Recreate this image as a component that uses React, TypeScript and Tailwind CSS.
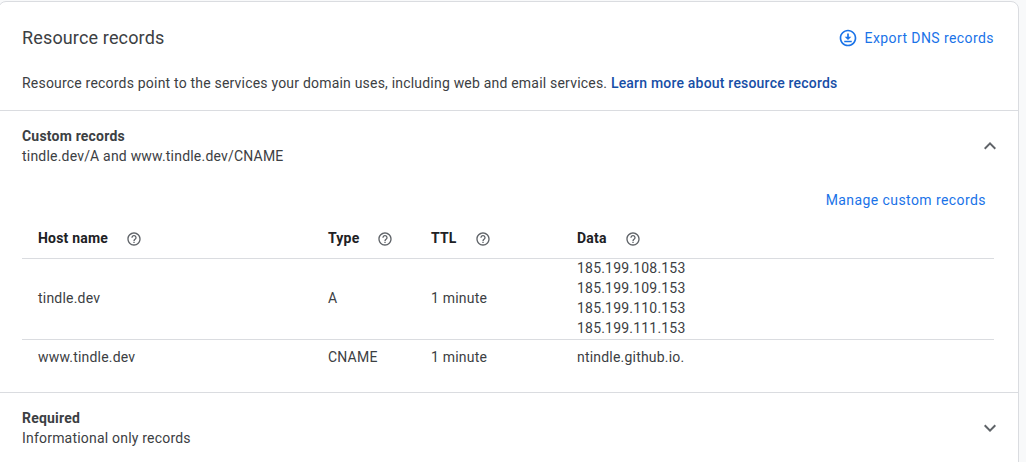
const font = "font-['Roboto',sans-serif]";

function HelpIcon() {
  return (
    <svg viewBox="0 0 24 24" className="h-4 w-4 fill-[#5f6368]">
      <path d="M11 18h2v-2h-2v2zm1-16C6.48 2 2 6.48 2 12s4.48 10 10 10 10-4.48 10-10S17.52 2 12 2zm0 18c-4.41 0-8-3.59-8-8s3.59-8 8-8 8 3.59 8 8-3.59 8-8 8zm0-14c-2.21 0-4 1.79-4 4h2c0-1.1.9-2 2-2s2 .9 2 2c0 2-3 1.75-3 5h2c0-2.25 3-2.5 3-5 0-2.21-1.79-4-4-4z" />
    </svg>
  );
}

function Chevron({ up }: { up?: boolean }) {
  return (
    <svg viewBox="0 0 24 24" className="h-6 w-6 fill-[#5f6368]">
      <path d={up ? "M12 8l-6 6 1.41 1.41L12 10.83l4.59 4.58L18 14z" : "M16.59 8.59L12 13.17 7.41 8.59 6 10l6 6 6-6z"} />
    </svg>
  );
}

function ExportIcon() {
  return (
    <svg viewBox="0 0 24 24" className="h-5 w-5 fill-[#1a73e8]">
      <path d="M12 2C6.48 2 2 6.48 2 12s4.48 10 10 10 10-4.48 10-10S17.52 2 12 2zm0 18c-4.41 0-8-3.59-8-8s3.59-8 8-8 8 3.59 8 8-3.59 8-8 8z" />
      <path d="M13 6.5h-2v4H8l4 4 4-4h-3zM7.5 15.3h9v1.9h-9z" />
    </svg>
  );
}

function Head({ label, width }: { label: string; width: string }) {
  return (
    <th className={`${width} h-10 p-0 pl-4 text-left align-middle font-bold`}>
      <span className="flex items-center gap-[18px]">
        {label}
        <span className="mt-0.5"><HelpIcon /></span>
      </span>
    </th>
  );
}

export default function App() {
  return (
    <div className={`${font} h-[462px] w-[1026px] overflow-hidden bg-[#f8f9fa] text-sm tracking-[0.2px] text-[#3c4043]`}>
      <div className="ml-[-2px] mt-px h-[480px] w-[1021px] rounded-t-lg border border-[#dadce0] bg-white">
        {/* header */}
        <div className="border-b border-[#dadce0] pb-[17px]">
          <div className="flex h-[71px] items-center justify-between pl-[23px] pr-[24px]">
            <h2 className="mt-px text-lg font-normal tracking-[0.15px] text-[#3c4043]">Resource records</h2>
            <a className="flex items-center gap-[7px] tracking-[0.42px] text-[#1a73e8]">
              <ExportIcon />
              Export DNS records
            </a>
          </div>
          <p className="pl-[23px] leading-5">
            Resource records point to the services your domain uses, including web and email services.{" "}
            <a className="font-medium text-[#174ea6]">Learn more about resource records</a>
          </p>
        </div>

        {/* custom records */}
        <div className="border-b border-[#dadce0] pb-[17px]">
          <div className="flex items-center justify-between pl-[23px] pr-4 pt-[15px]">
            <div className="leading-5">
              <div className="font-bold">Custom records</div>
              <div>tindle.dev/A and www.tindle.dev/CNAME</div>
            </div>
            <Chevron up />
          </div>
          <div className="flex h-[52px] items-end justify-end pb-[8px] pr-[32px]">
            <a className="tracking-[0.42px] text-[#1a73e8]">Manage custom records</a>
          </div>
          <table className="ml-[23px] w-[972px] table-fixed border-collapse leading-5">
            <thead>
              <tr className="border-b border-[#dadce0] text-[#202124]">
                <Head label="Host name" width="w-[290px]" />
                <Head label="Type" width="w-[103px]" />
                <Head label="TTL" width="w-[146px]" />
                <Head label="Data" width="w-auto" />
              </tr>
            </thead>
            <tbody>
              <tr className="border-b border-[#dadce0]">
                <td className="pb-0.5 pl-4">tindle.dev</td>
                <td className="pb-0.5 pl-4">A</td>
                <td className="pb-0.5 pl-4">1 minute</td>
                <td className="pb-px pl-4">
                  <div className="-mt-px">185.199.108.153</div>
                  <div>185.199.109.153</div>
                  <div>185.199.110.153</div>
                  <div>185.199.111.153</div>
                </td>
              </tr>
              <tr className="h-9">
                <td className="pl-4">www.tindle.dev</td>
                <td className="pl-4">CNAME</td>
                <td className="pl-4">1 minute</td>
                <td className="pl-4">ntindle.github.io.</td>
              </tr>
            </tbody>
          </table>
        </div>

        {/* required */}
        <div className="flex items-center justify-between pl-[23px] pr-4 pt-[15px]">
          <div className="leading-5">
            <div className="font-bold">Required</div>
            <div>Informational only records</div>
          </div>
          <Chevron />
        </div>
      </div>
    </div>
  );
}
